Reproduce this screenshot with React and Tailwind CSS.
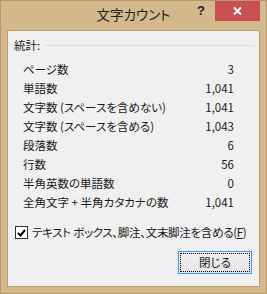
import React from "react";

const rows = [
  ["ページ数", "3"],
  ["単語数", "1,041"],
  ["文字数 (スペースを含めない)", "1,041"],
  ["文字数 (スペースを含める)", "1,043"],
  ["段落数", "6"],
  ["行数", "56"],
  ["半角英数の単語数", "0"],
  ["全角文字 + 半角カタカナの数", "1,041"],
];

export default function App() {
  return (
    <div
      className="relative w-[267px] h-[294px] bg-[#d4b98c] border border-[#b59a6c] flex flex-col text-[#1a1a1a] font-['Noto_Sans_CJK_JP',sans-serif] [font-feature-settings:'palt']"
    >
      <div className="h-[29px] flex items-center justify-center">
        <span className="text-[13.5px] text-[#222] pb-[1px] leading-none">文字カウント</span>
      </div>
      <div className="absolute top-0 left-[192px] h-[20px] w-[16px] flex items-center justify-center text-[13px] font-bold text-[#222] font-['Liberation_Sans',sans-serif]">
        ?
      </div>
      <div className="absolute top-0 left-[214px] w-[45px] h-[20px] bg-[#c75050] flex items-center justify-center">
        <svg width="9" height="8" viewBox="0 0 9 8">
          <path d="M1 0.5 L8 7.5 M8 0.5 L1 7.5" stroke="#fff" strokeWidth="2" />
        </svg>
      </div>
      <div className="mx-[6px] mb-[6px] flex-1 border border-[#b89f74] bg-[#f0f0f0] flex flex-col px-[6px] pt-[5px] text-[11.5px]">
        <div className="h-[19px] flex items-center">
          <span className="leading-none">統計:</span>
          <div className="flex-1 ml-[5px] mr-[-1px] h-px bg-[#dcdcdc]" />
        </div>
        <div className="mt-[5px] flex flex-col pl-[9px] pr-[19px]">
          {rows.map(([k, v]) => (
            <div key={k} className="h-[19px] flex items-center justify-between">
              <span className="leading-none whitespace-pre">{k}</span>
              <span className="leading-none">{v}</span>
            </div>
          ))}
        </div>
        <div className="mt-[11px] h-[19px] flex items-center pl-[1px]">
          <div className="w-[13px] h-[13px] border border-[#333] bg-white flex items-center justify-center shrink-0">
            <svg width="9" height="8" viewBox="0 0 9 8">
              <path d="M1 4 L3.5 6.5 L8 1" stroke="#000" strokeWidth="2" fill="none" />
            </svg>
          </div>
          <span className="ml-[4px] leading-none whitespace-nowrap tracking-[-0.3px]">
            テキスト ボックス、脚注、文末脚注を含める(<span className="underline">F</span>)
          </span>
        </div>
        <div className="mt-[9px] flex justify-end pr-[1px]">
          <div className="w-[74px] h-[23px] border border-[#3399ff] bg-[linear-gradient(#f0f0f0,#e5e5e5)] p-[1px] flex">
            <div className="flex-1 border border-dotted border-black flex items-center justify-center leading-none">
              閉じる
            </div>
          </div>
        </div>
      </div>
    </div>
  );
}
